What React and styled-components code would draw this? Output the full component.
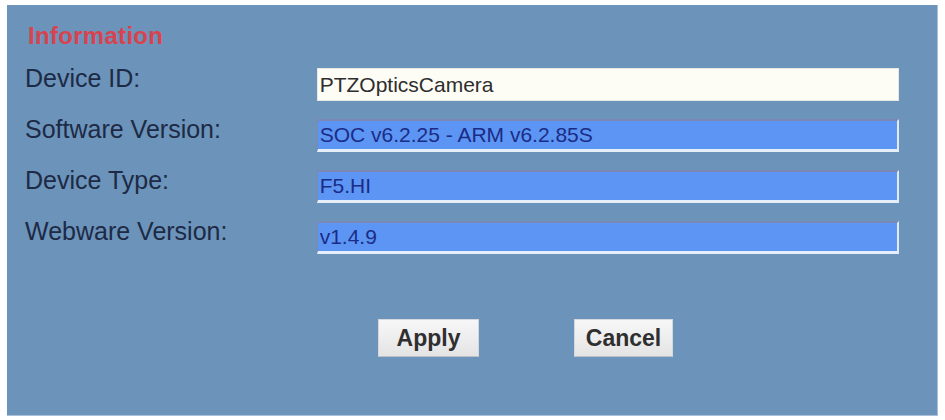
import React, {useState} from 'react';
import styled, {createGlobalStyle} from "styled-components";

const GlobalStyle = createGlobalStyle `
  html, body {
    margin: 0;
    padding: 0;
    background-color: #ffffff;
  }
  body {
    font-family: "Liberation Sans", Arial, sans-serif;
  }
`;

const Panel = styled.div `
  box-sizing: border-box;
  width: 931px;
  height: 411px;
  margin: 5px 0 0 7px;
  padding: 19px 38px 0 18px;
  background-color: #6c93ba;
  border-right: 1px solid #a9c0d8;
  border-bottom: 1px solid #a9c0d8;
  display: flex;
  flex-direction: column;
`;

const Title = styled.div `
  margin-left: 3px;
  font-size: 24px;
  line-height: 24px;
  letter-spacing: 0.3px;
  font-weight: bold;
  color: #d9434f;
`;

const Fields = styled.div `
  margin-top: 20px;
  display: flex;
  flex-direction: column;
  gap: 18px;
`;

const Row = styled.div `
  display: flex;
  align-items: flex-start;
`;

const Label = styled.div `
  width: 292px;
  margin-top: -2px;
  font-size: 25px;
  line-height: 24px;
  color: #1d2a45;
`;

const Field = styled.input `
  box-sizing: border-box;
  width: 583px;
  height: 33px;
  padding: 0 0 0 2px;
  font-family: "Liberation Sans", Arial, sans-serif;
  font-size: 21px;
  outline: none;
  border-style: solid;
  border-width: ${props => props.$readOnly ? "2px 2px 3px 1px" : "1px"};
  border-color: ${props => props.$readOnly
    ? "#7b88b4 #e2eaf7 #e6eef9 #7b88b4"
    : "#e8e8e0"};
  background-color: ${props => props.$readOnly ? "#5c95f4" : "#fdfdf6"};
  color: ${props => props.$readOnly ? "#1b2c86" : "#2e2e2e"};
`;

const Buttons = styled.div `
  margin-top: 65px;
  margin-left: 353px;
  display: flex;
  gap: 95px;
`;

const Button = styled.button `
  box-sizing: border-box;
  width: ${props => props.$width}px;
  height: 38px;
  padding: 0;
  font-family: "Liberation Sans", Arial, sans-serif;
  font-size: 23px;
  font-weight: bold;
  color: #2f2f2f;
  background: linear-gradient(#f7f7f7, #e4e4e4);
  border: 1px solid #d4d8de;
  border-bottom-color: #b9c0ca;
  cursor: pointer;
`;

const fields = [
    {label: "Device ID:", value: "PTZOpticsCamera", readOnly: false},
    {label: "Software Version:", value: "SOC v6.2.25 - ARM v6.2.85S", readOnly: true},
    {label: "Device Type:", value: "F5.HI", readOnly: true},
    {label: "Webware Version:", value: "v1.4.9", readOnly: true},
];

const App = () => {
    const [deviceId, setDeviceId] = useState(fields[0].value);

    return (
        <>
            <GlobalStyle/>
            <Panel>
                <Title>Information</Title>
                <Fields>
                    {fields.map(item => (
                        <Row key={item.label}>
                            <Label>{item.label}</Label>
                            {item.readOnly
                                ? <Field $readOnly readOnly value={item.value}/>
                                : <Field value={deviceId} onChange={(e) => setDeviceId(e.target.value)}/>}
                        </Row>
                    ))}
                </Fields>
                <Buttons>
                    <Button $width={101}>Apply</Button>
                    <Button $width={99}>Cancel</Button>
                </Buttons>
            </Panel>
        </>
    );
};

export default App;
